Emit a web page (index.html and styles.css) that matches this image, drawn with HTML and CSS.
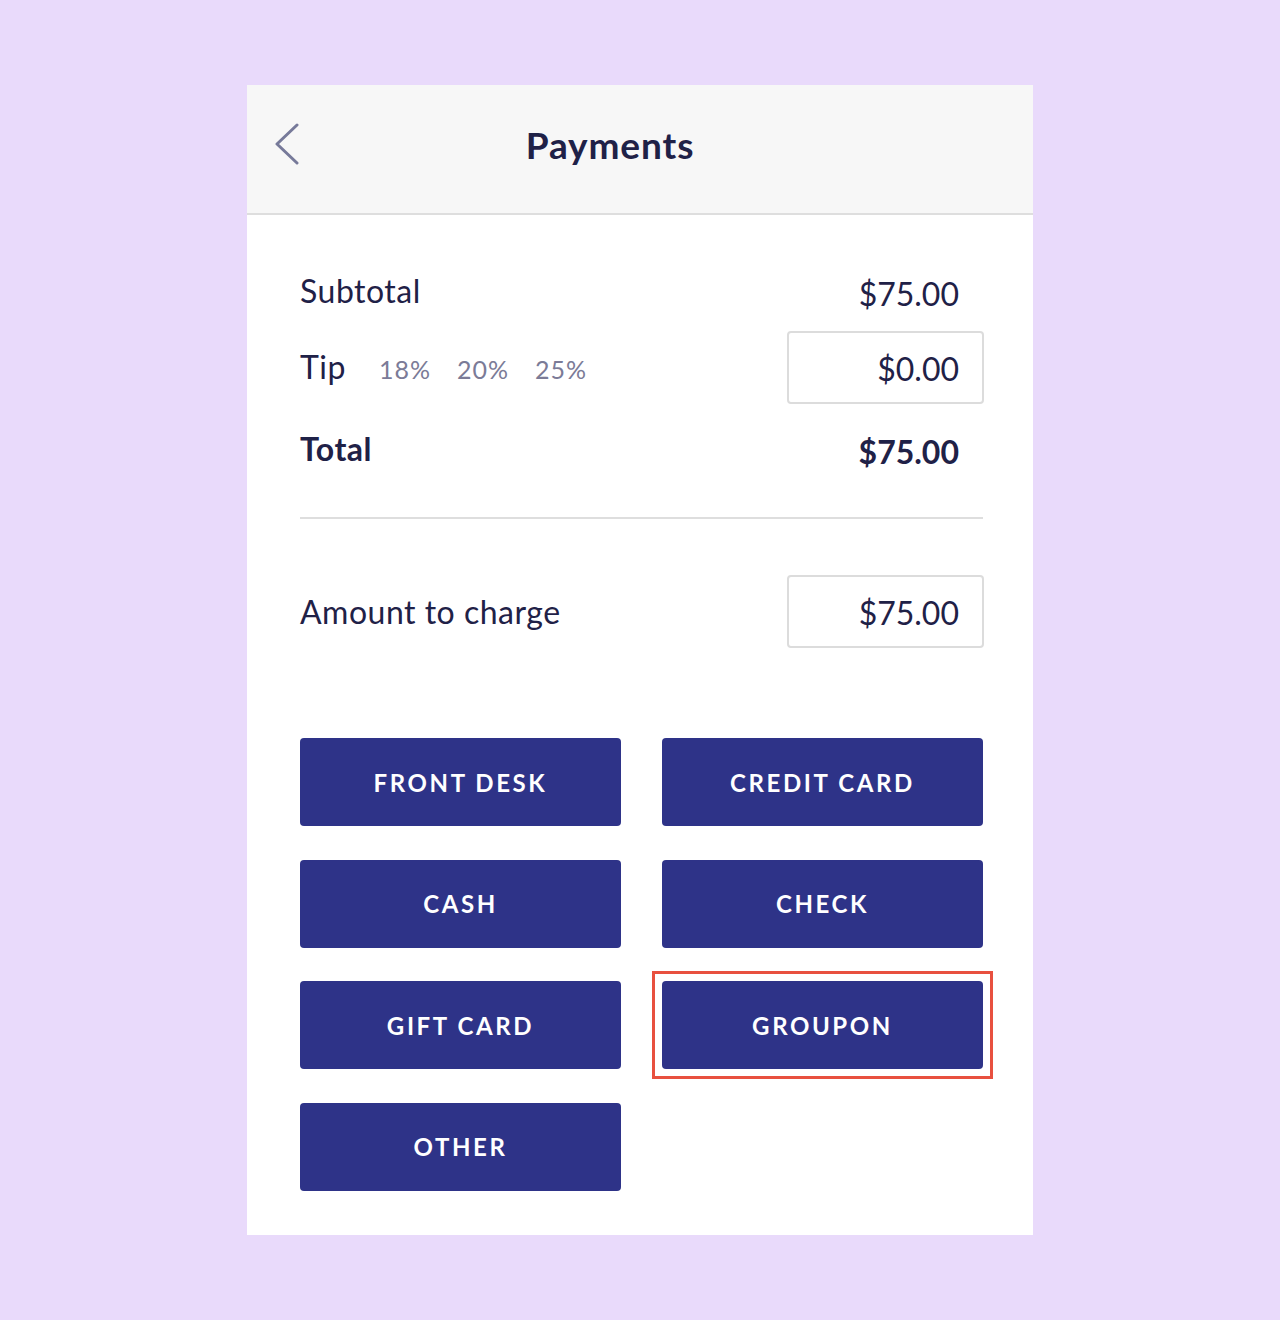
FILE: index.html
```html
<!DOCTYPE html>
<html lang="en">
<head>
<meta charset="utf-8">
<title>Payments</title>
<link rel="stylesheet" href="styles.css">
</head>
<body>
<div class="card">
  <header class="topbar">
    <div class="back">
      <svg width="26" height="42" viewBox="0 0 26 42" aria-hidden="true">
        <path d="M23 2 L3 21 L23 40" fill="none" stroke="#777a9a" stroke-width="3" stroke-linecap="round" stroke-linejoin="round"/>
      </svg>
    </div>
    <h1 class="title">Payments</h1>
    <div></div>
  </header>
  <main class="content">
    <div class="row row-subtotal">
      <span class="label">Subtotal</span>
      <span class="value">$75.00</span>
    </div>
    <div class="row row-tip">
      <div class="tip-left">
        <span class="label">Tip</span>
        <span class="pct">18%</span>
        <span class="pct">20%</span>
        <span class="pct">25%</span>
      </div>
      <div class="box">$0.00</div>
    </div>
    <div class="row row-total">
      <span class="label bold">Total</span>
      <span class="value bold">$75.00</span>
    </div>
    <div class="divider"></div>
    <div class="row row-charge">
      <span class="label">Amount to charge</span>
      <div class="box">$75.00</div>
    </div>
    <div class="buttons">
      <button class="pay">FRONT DESK</button>
      <button class="pay">CREDIT CARD</button>
      <button class="pay">CASH</button>
      <button class="pay">CHECK</button>
      <button class="pay">GIFT CARD</button>
      <button class="pay highlight">GROUPON</button>
      <button class="pay">OTHER</button>
    </div>
  </main>
</div>
</body>
</html>
```

FILE: styles.css
```css
* { box-sizing: border-box; }
html, body { margin: 0; padding: 0; }
body {
  background: #e9dafb;
  font-family: "Lato", "Noto Sans", sans-serif;
  color: #1f2147;
  padding-top: 85px;
  min-height: 1320px;
}
.card {
  width: 786px;
  height: 1150px;
  margin: 0 auto;
  background: #ffffff;
}
.topbar {
  height: 130px;
  background: #f7f7f7;
  border-bottom: 2px solid #dedede;
  display: grid;
  grid-template-columns: 73px 1fr 133px;
  align-items: center;
  padding-bottom: 10px;
}
.back {
  display: flex;
  justify-content: flex-end;
  padding-right: 20px;
}
.back svg { display: block; }
.title {
  margin: 0;
  text-align: center;
  font-size: 37px;
  font-weight: 700;
  letter-spacing: 0.9px;
  color: #1f2147;
}
.content {
  padding: 39px 49px 44px 53px;
}
.row {
  display: flex;
  justify-content: space-between;
  align-items: center;
  height: 73px;
}
.row-tip { margin-top: 4px; }
.row-total { margin-top: 8px; }
.label {
  font-size: 32px;
  line-height: 1;
  letter-spacing: 0.5px;
}
.value {
  font-size: 32px;
  line-height: 1;
  padding-right: 25px;
  padding-top: 6px;
}
.bold { font-weight: 700; }
.tip-left {
  display: flex;
  align-items: baseline;
}
.pct {
  font-size: 25px;
  color: #7b7b97;
  margin-left: 26px;
  letter-spacing: 1px;
}
.tip-left .label + .pct { margin-left: 33px; }
.box {
  width: 197px;
  height: 73px;
  border: 2px solid #dcdcdc;
  border-radius: 4px;
  display: flex;
  align-items: center;
  justify-content: flex-end;
  padding-right: 23px;
  font-size: 32px;
  padding-top: 2px;
}
.divider {
  height: 2px;
  background: #dedede;
  margin-top: 32px;
  margin-right: 1px;
}
.row-charge { margin-top: 56px; }
.buttons {
  margin-top: 90px;
  display: grid;
  grid-template-columns: 321px 321px;
  column-gap: 41px;
  row-gap: 33.5px;
}
.pay {
  height: 88px;
  border: none;
  border-radius: 4px;
  background: #2e3388;
  color: #ffffff;
  font-family: "Lato", "Noto Sans", sans-serif;
  font-size: 24px;
  font-weight: 700;
  letter-spacing: 2.6px;
  padding: 0;
  cursor: pointer;
}
.highlight {
  position: relative;
}
.highlight::after {
  content: "";
  position: absolute;
  top: -10px;
  left: -10px;
  right: -10px;
  bottom: -10px;
  border: 3px solid #e8503f;
  pointer-events: none;
}
```
